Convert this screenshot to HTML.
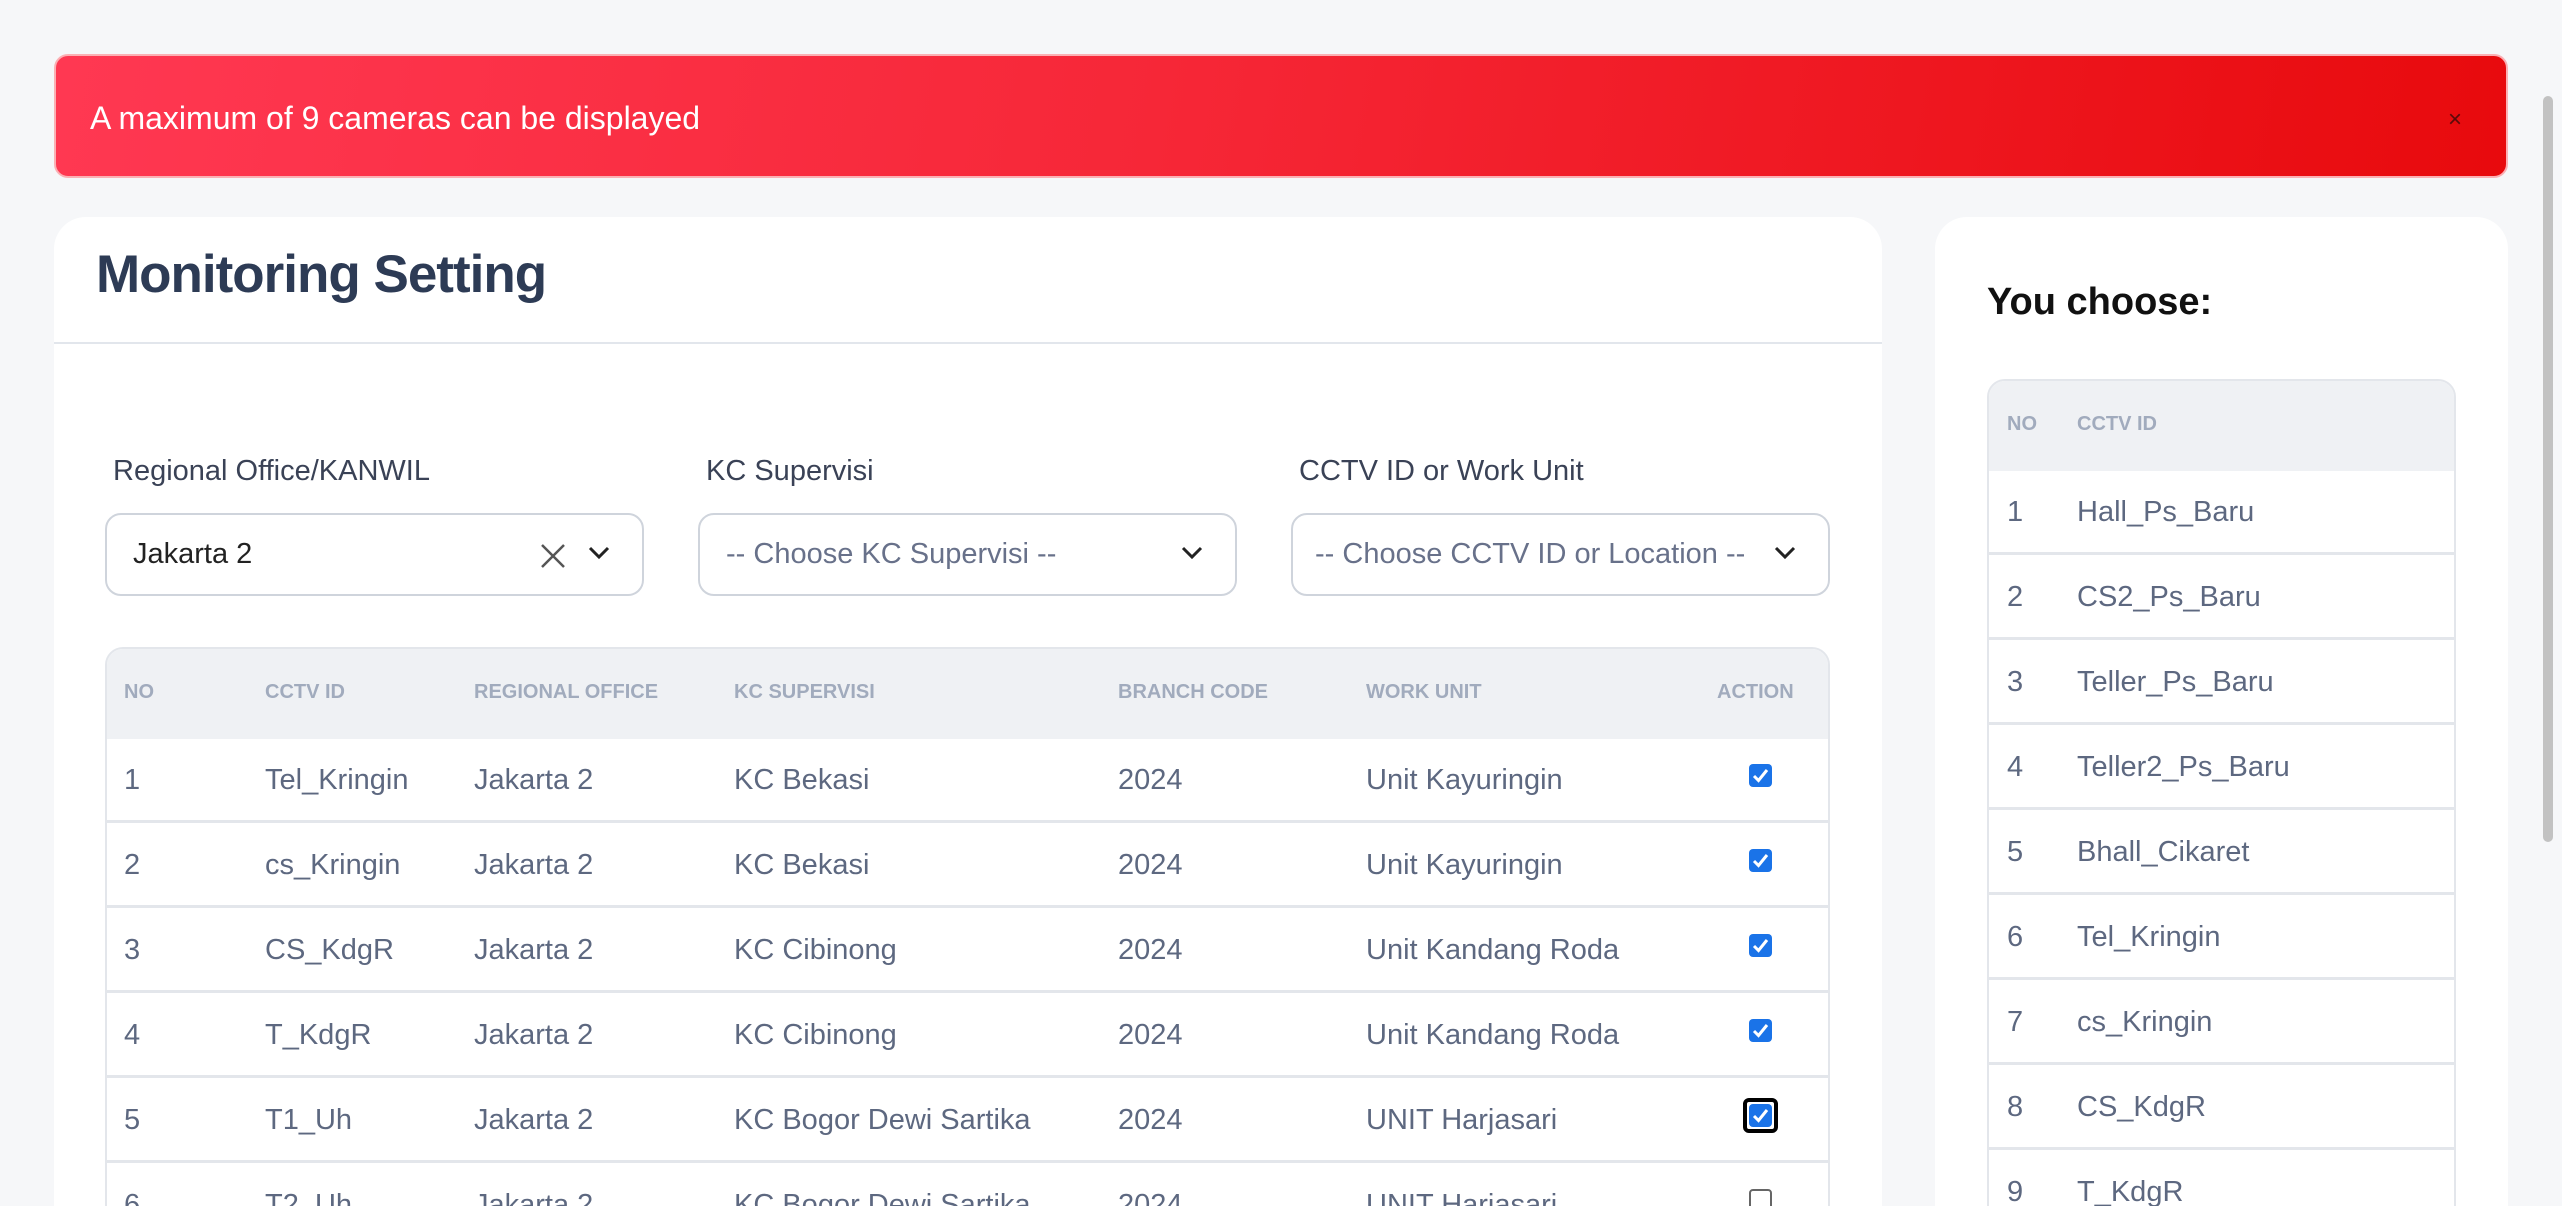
<!DOCTYPE html>
<html style="height:1206px;overflow:hidden"><head><meta charset="utf-8"><style>
*{box-sizing:border-box;margin:0;padding:0}
html,body{width:2562px;height:1206px;overflow:hidden}
body{background:#f6f7f9;font-family:"Liberation Sans",sans-serif}
#wrap{position:relative;width:2562px;height:1206px;overflow:hidden;background:#f6f7f9}
.abs{position:absolute}
.alert{left:54px;top:54px;width:2454px;height:124px;border-radius:14px;background:linear-gradient(100deg,#ff3852 0%,#f62737 45%,#e80a0d 100%);border:2px solid #fbb0b4}
.alert .t{position:absolute;left:34px;top:44px;font-size:32px;color:#fff;line-height:36px}
.alert .x{position:absolute;left:2392px;top:52px;font-size:24px;color:#5a0a0a;line-height:24px}
.card{background:#fff;border-radius:32px}
.title{left:96px;top:244px;font-size:53px;font-weight:bold;color:#2d3b55;letter-spacing:-1px}
.lbl{top:455px;font-size:29px;color:#3a4256}
.sel{top:513px;height:83px;width:539px;border:2px solid #cfd4dc;border-radius:16px;font-size:29px;line-height:79px;padding-left:26px;color:#68718a}
.chev{position:absolute;top:30px;width:24px;height:16px}
.th{font-size:20px;font-weight:bold;color:#a1abbd;line-height:24px}
.td{font-size:29px;color:#5d6880;line-height:34px}
.line{height:3px;background:#e3e6eb}
.cb{width:23px;height:23px;border-radius:4px;background:#1a73e8}
</style></head><body><div id="wrap">
<div class="abs card" style="left:54px;top:217px;width:1828px;height:1060px"></div>
<div class="abs card" style="left:1935px;top:217px;width:573px;height:1060px"></div>
<div class="abs alert"><div class="t">A maximum of 9 cameras can be displayed</div><div class="x">×</div></div>

<div class="abs title">Monitoring Setting</div>
<div class="abs" style="left:54px;top:342px;width:1828px;height:2px;background:#e2e6ec"></div>

<div class="abs lbl" style="left:113px">Regional Office/KANWIL</div>
<div class="abs lbl" style="left:706px">KC Supervisi</div>
<div class="abs lbl" style="left:1299px">CCTV ID or Work Unit</div>

<div class="abs sel" style="left:105px;color:#222">Jakarta 2
<svg class="abs" style="left:432px;top:27px" width="28" height="28" viewBox="0 0 28 28"><path d="M3 3L25 25M25 3L3 25" stroke="#555" stroke-width="2.5"/></svg>
<svg class="chev" style="left:480px" viewBox="0 0 24 16"><path d="M3 3l9 9 9-9" fill="none" stroke="#222" stroke-width="3"/></svg></div>
<div class="abs sel" style="left:698px">-- Choose KC Supervisi --
<svg class="chev" style="left:480px" viewBox="0 0 24 16"><path d="M3 3l9 9 9-9" fill="none" stroke="#222" stroke-width="3"/></svg></div>
<div class="abs sel" style="left:1291px;padding-left:22px">-- Choose CCTV ID or Location --
<svg class="chev" style="left:480px" viewBox="0 0 24 16"><path d="M3 3l9 9 9-9" fill="none" stroke="#222" stroke-width="3"/></svg></div>

<div class="abs" style="left:105px;top:647px;width:1725px;height:700px;border:2px solid #e3e6eb;border-radius:18px;overflow:hidden;background:#fff">
<div style="height:90px;background:#eff1f4"></div>
</div>
<div class="abs th" style="top:680px;left:124px">NO</div>
<div class="abs th" style="top:680px;left:265px">CCTV ID</div>
<div class="abs th" style="top:680px;left:474px">REGIONAL OFFICE</div>
<div class="abs th" style="top:680px;left:734px">KC SUPERVISI</div>
<div class="abs th" style="top:680px;left:1118px">BRANCH CODE</div>
<div class="abs th" style="top:680px;left:1366px">WORK UNIT</div>
<div class="abs th" style="top:680px;left:1717px">ACTION</div>

<div class="abs" style="left:1987px;top:281px;font-size:38px;font-weight:bold;color:#111">You choose:</div>
<div class="abs" style="left:1987px;top:379px;width:469px;height:950px;border:2px solid #e3e6eb;border-radius:18px;overflow:hidden;background:#fff">
<div style="height:90px;background:#eff1f4"></div></div>
<div class="abs th" style="top:412px;left:2007px">NO</div>
<div class="abs th" style="top:412px;left:2077px">CCTV ID</div>

<div id="rows"></div>
<script>
var d=[["1","Tel_Kringin","KC Bekasi","Unit Kayuringin",1],["2","cs_Kringin","KC Bekasi","Unit Kayuringin",1],["3","CS_KdgR","KC Cibinong","Unit Kandang Roda",1],["4","T_KdgR","KC Cibinong","Unit Kandang Roda",1],["5","T1_Uh","KC Bogor Dewi Sartika","UNIT Harjasari",2],["6","T2_Uh","KC Bogor Dewi Sartika","UNIT Harjasari",0]];
var h="";
d.forEach(function(r,i){var y=737+i*85;var c=y+42-16;
if(i>0)h+='<div class="abs line" style="left:107px;width:1721px;top:'+(y-2)+'px"></div>';
h+='<div class="abs td" style="top:'+c+'px;left:124px">'+r[0]+'</div>';
h+='<div class="abs td" style="top:'+c+'px;left:265px">'+r[1]+'</div>';
h+='<div class="abs td" style="top:'+c+'px;left:474px">Jakarta 2</div>';
h+='<div class="abs td" style="top:'+c+'px;left:734px">'+r[2]+'</div>';
h+='<div class="abs td" style="top:'+c+'px;left:1118px">2024</div>';
h+='<div class="abs td" style="top:'+c+'px;left:1366px">'+r[3]+'</div>';
var cy=y+27;
if(r[4]==0)h+='<div class="abs" style="left:1749px;top:'+cy+'px;width:23px;height:23px;border:2px solid #666;border-radius:4px;background:#fff"></div>';
else{ if(r[4]==2)h+='<div class="abs" style="left:1743px;top:'+(cy-6)+'px;width:35px;height:35px;border:4px solid #000;border-radius:6px"></div>';
h+='<div class="abs cb" style="left:1749px;top:'+cy+'px"><svg width="23" height="23" viewBox="0 0 23 23"><path d="M5 12l4.5 4.5L18 6" fill="none" stroke="#fff" stroke-width="3"/></svg></div>';}
});
var n=["Hall_Ps_Baru","CS2_Ps_Baru","Teller_Ps_Baru","Teller2_Ps_Baru","Bhall_Cikaret","Tel_Kringin","cs_Kringin","CS_KdgR","T_KdgR"];
n.forEach(function(s,i){var y=469+i*85;var c=y+42-16;
if(i>0)h+='<div class="abs line" style="left:1989px;width:465px;top:'+(y-2)+'px"></div>';
h+='<div class="abs td" style="top:'+c+'px;left:2007px">'+(i+1)+'</div>';
h+='<div class="abs td" style="top:'+c+'px;left:2077px">'+s+'</div>';});
document.getElementById("rows").innerHTML=h;
</script>

<div class="abs" style="left:2543px;top:96px;width:10px;height:746px;border-radius:5px;background:#c2c2c2"></div>
</div></body></html>
